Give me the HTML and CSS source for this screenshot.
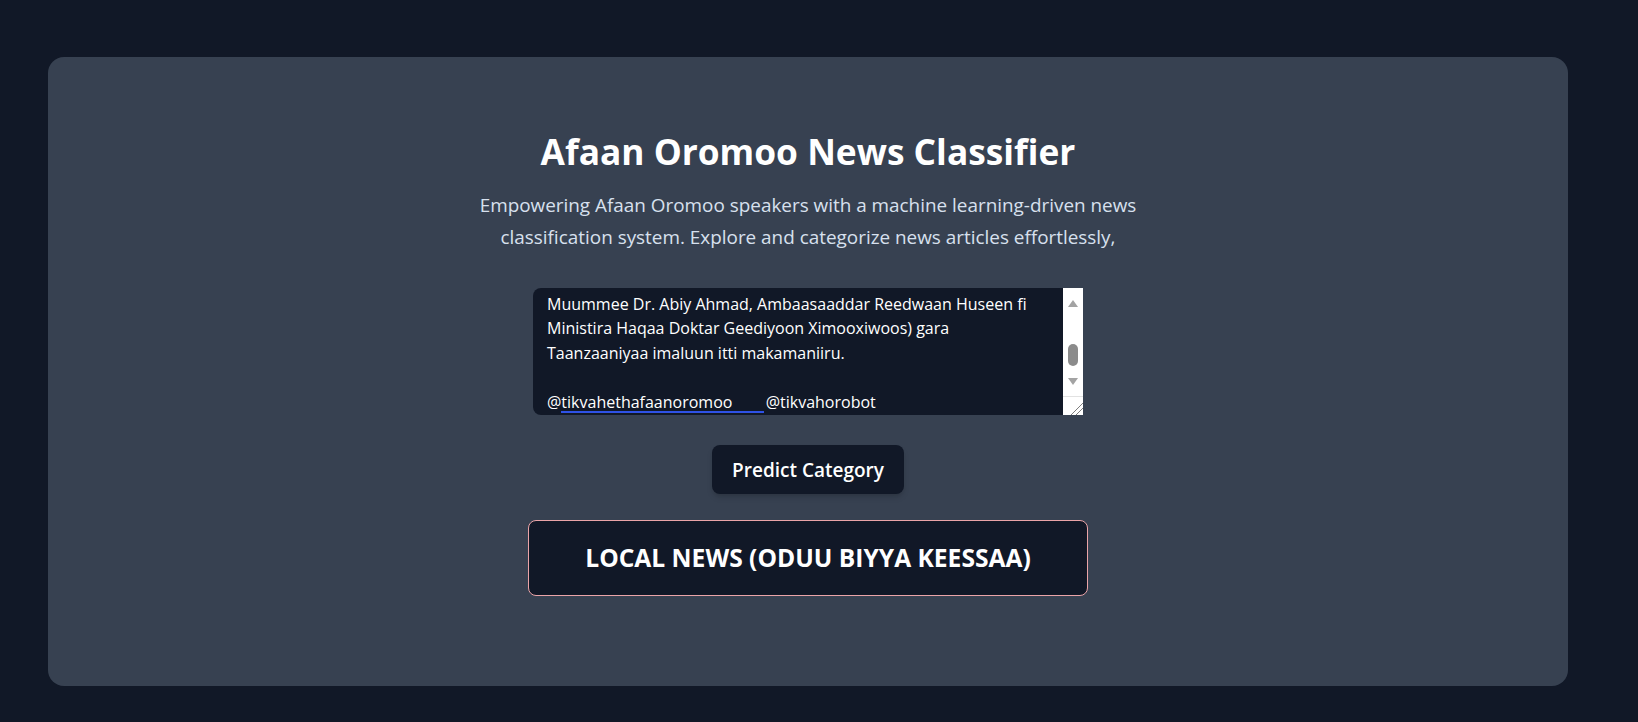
FILE: index.html
```html
<!DOCTYPE html>
<html lang="om">
<head>
<meta charset="utf-8">
<title>Afaan Oromoo News Classifier</title>
<link rel="stylesheet" href="styles.css">
</head>
<body>
<main class="page">
  <section class="card">
    <h1 class="title">Afaan Oromoo News Classifier</h1>
    <p class="subtitle">Empowering Afaan Oromoo speakers with a machine learning-driven news classification system. Explore and categorize news articles effortlessly,</p>
    <form class="form">
      <div class="input-wrap">
        <textarea class="news-input" wrap="off" spellcheck="false">Ministirri Muummee Itoophiyaa Dr. Abiy Ahmad
daawwannaa hojii guyyaa lamaaf Taanzaaniyaa,
magaalaa Daar es Salaam gahaniiru.

Pirezidantiin Taanzaaniyaa Saamiyaa Suluhuu Hasan
simannaa ho'aa godhaniif; hariiroo biyyoota
lamaanii cimsuu irratti mari'ataniiru.

Koreen ol'aanoo marii (Ministira
Muummee Dr. Abiy Ahmad, Ambaasaaddar Reedwaan Huseen fi
Ministira Haqaa Doktar Geediyoon Ximooxiwoos) gara
Taanzaaniyaa imaluun itti makamaniiru.

@tikvahethafaanoromoo        @tikvahorobot
</textarea>
        <span class="link-mark"></span>
        <div class="scrollbar" aria-hidden="true">
          <span class="arrow arrow-up"></span>
          <span class="thumb"></span>
          <span class="arrow arrow-down"></span>
          <span class="grip"></span>
        </div>
      </div>
      <button class="predict-btn" type="button">Predict Category</button>
    </form>
    <div class="result">
      <h2 class="result-text">LOCAL NEWS (ODUU BIYYA KEESSAA)</h2>
    </div>
  </section>
</main>
<script src="script.js"></script>
</body>
</html>
```

FILE: styles.css
```css
* { box-sizing: border-box; }

html, body {
  margin: 0;
  padding: 0;
  background: #111827;
}

body {
  font-family: "Open Sans", "Noto Sans", sans-serif;
  color: #ffffff;
}

.page {
  padding: 57px 70px 36px 48px;
}

.card {
  height: 629px;
  background: #374151;
  border-radius: 16px;
  display: flex;
  flex-direction: column;
  align-items: center;
  padding-top: 74px;
}

.title {
  margin: 0;
  font-size: 35.3px;
  line-height: 40px;
  font-weight: 700;
  color: #ffffff;
}

.subtitle {
  margin: 18px 0 0;
  max-width: 672px;
  text-align: center;
  font-size: 18.9px;
  line-height: 32px;
  color: #d7e0ee;
}

.form {
  margin-top: 35px;
  display: flex;
  flex-direction: column;
  align-items: center;
}

.input-wrap {
  position: relative;
  width: 550px;
  height: 127px;
}

.news-input {
  display: block;
  width: 550px;
  height: 127px;
  margin: 0;
  border: none;
  border-radius: 8px;
  background: #111827;
  color: #ffffff;
  font-family: "Open Sans", "Noto Sans", sans-serif;
  font-size: 16px;
  line-height: 24.5px;
  padding: 12px 32px 12px 14px;
  overflow-x: hidden;
  overflow-y: auto;
  scrollbar-width: none;
  outline: none;
  resize: vertical;
}

.link-mark {
  position: absolute;
  left: 28px;
  top: 123px;
  width: 203px;
  height: 2px;
  background: #2f52e6;
}

.scrollbar {
  position: absolute;
  top: 0;
  right: 0;
  width: 20px;
  height: 127px;
  background: #ffffff;
  pointer-events: none;
}

.arrow {
  position: absolute;
  left: 5px;
  width: 0;
  height: 0;
  border-left: 5px solid transparent;
  border-right: 5px solid transparent;
}

.arrow-up {
  top: 12px;
  border-bottom: 7px solid #a3a3a3;
}

.arrow-down {
  top: 90px;
  border-top: 7px solid #a3a3a3;
}

.thumb {
  position: absolute;
  left: 5px;
  top: 56px;
  width: 10px;
  height: 22px;
  border-radius: 5px;
  background: #8b8b8b;
}

.grip {
  position: absolute;
  left: 0;
  bottom: 0;
  width: 20px;
  height: 19px;
  border-top: 1px solid #e2e2e2;
  background: linear-gradient(135deg, transparent 0 66%, #7d7d7d 66% 70%, transparent 70% 80%, #7d7d7d 80% 84%, transparent 84%);
}

.predict-btn {
  margin-top: 30px;
  height: 49px;
  padding: 0 20px;
  border: none;
  border-radius: 8px;
  background: #111827;
  color: #ffffff;
  font-family: "Open Sans", "Noto Sans", sans-serif;
  font-size: 19px;
  font-weight: 600;
  box-shadow: 0 4px 6px -1px rgba(0, 0, 0, 0.15), 0 2px 4px -2px rgba(0, 0, 0, 0.12);
  cursor: pointer;
}

.result {
  margin-top: 26px;
  width: 560px;
  height: 76px;
  border: 1px solid #eba4a8;
  border-radius: 8px;
  background: #111827;
  display: flex;
  align-items: center;
  justify-content: center;
}

.result-text {
  margin: 0;
  font-size: 24.6px;
  line-height: 32px;
  font-weight: 700;
  color: #ffffff;
}
```

FILE: script.js
```js
var box = document.querySelector('.news-input');
box.scrollTop = 229;
```
